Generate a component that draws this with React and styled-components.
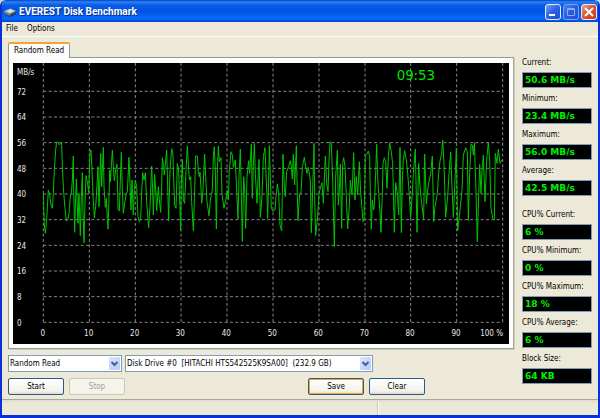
import React from "react";
import styled, { createGlobalStyle, css } from "styled-components";

const GlobalStyle = createGlobalStyle`
  * { box-sizing: border-box; }
  body {
    margin: 0;
    background: #c9dcc0;
    font-family: "DejaVu Sans Condensed", "DejaVu Sans", sans-serif;
    font-stretch: condensed;
    font-size: 8px;
    line-height: 14px;
    color: #000;
  }
`;

const Window = styled.div`
  display: flex;
  flex-direction: column;
  min-height: 100vh;
  border: 2px solid #0831d9;
  border-top: 0;
  border-bottom-width: 3px;
  border-radius: 6px 6px 0 0;
  background: #ece9d8;
  overflow: hidden;
`;

const TitleBar = styled.header`
  display: flex;
  align-items: center;
  gap: 2px;
  height: 22px;
  padding: 2px 0 0 3px;
  margin: 0 -2px;
  background: linear-gradient(#0842c0 0, #2a83f6 2px, #0a5be8 5px, #0053e1 11px, #0566fc 17px, #0566fc 19px, #0046cc 22px);
`;

const Title = styled.h1`
  flex: 1;
  margin: 0;
  color: #fff;
  font-family: Roboto, sans-serif;
  font-stretch: normal;
  font-size: 10px;
  font-weight: 700;
  text-shadow: 1px 1px #0a2f8c;
`;

const Caption = styled.div`
  display: flex;
  gap: 2px;
  padding-right: 3px;
`;

const captionTones = {
  blue: "linear-gradient(135deg, #7ba2f4, #2f63e3 45%, #1c4fd0)",
  faded: "linear-gradient(135deg, #4f80ed, #2860e3 45%, #1d52d2)",
  red: "linear-gradient(135deg, #f0a088, #e35430 45%, #c93b14)",
};

const CaptionButton = styled.button`
  display: flex;
  width: 16px;
  height: 16px;
  padding: 0;
  border: 1px solid ${(p) => (p.$tone === "faded" ? "#7f9fed" : "#e4ecfb")};
  border-radius: 3px;
  background: ${(p) => captionTones[p.$tone]};
`;

const MenuBar = styled.nav`
  display: flex;
  gap: 9px;
  height: 15px;
  padding-left: 4px;
  border-bottom: 1px solid #fff;
`;

const MenuItem = styled.button`
  padding: 0;
  border: 0;
  background: none;
  font: inherit;
`;

const Body = styled.main`
  flex: 1;
  display: flex;
  gap: 8px;
  padding: 5px 4px 4px 6px;
`;

const Work = styled.section`
  flex: 1;
  min-width: 0;
`;

const Tab = styled.button`
  display: block;
  position: relative;
  height: 16px;
  padding: 0 5px;
  margin-bottom: -1px;
  border: 1px solid #919b9c;
  border-top: 2px solid #f3a52f;
  border-bottom: 0;
  border-radius: 2px 2px 0 0;
  background: #fcfcfe;
  font: inherit;
`;

const Panel = styled.div`
  padding: 5px 4px 4px;
  border: 1px solid #919b9c;
  border-right-color: #aca899;
  background: #fcfcfa;
  box-shadow: 1px 1px #d0cebf;
`;

const Plot = styled.svg`
  display: block;
  width: 100%;
  background: #000;
  font-size: 24px;
  fill: #e8e8e8;
`;

const Controls = styled.form`
  display: grid;
  gap: 6px;
  padding-top: 6px;
`;

const Row = styled.div`
  display: flex;
  gap: ${(p) => p.$gap}px;
`;

const Combo = styled.div`
  position: relative;
  width: ${(p) => p.$width}px;
  height: 17px;
  border: 1px solid #7f9db9;
  background: #fff;
`;

const Select = styled.select`
  display: block;
  width: 100%;
  height: 15px;
  padding: 0 14px 0 1px;
  border: 0;
  appearance: none;
  background: #fff;
  color: #000;
  font: inherit;
`;

const DropMark = styled.span`
  position: absolute;
  top: 1px;
  right: 1px;
  display: flex;
  width: 11px;
  height: 13px;
  border-radius: 1px;
  background: linear-gradient(135deg, #dbe5fe, #b4c9f8);
  pointer-events: none;
`;

const Button = styled.button`
  width: 56px;
  height: 17px;
  padding: 0;
  border: 1px solid #2c5b86;
  border-radius: 2px;
  background: linear-gradient(#fff, #f3f2ec 80%, #dcd8ca);
  color: #000;
  font: inherit;

  &:disabled {
    border-color: #c9c7ba;
    background: #f5f4ea;
    color: #a1a192;
  }

  ${(p) =>
    p.$focused &&
    css`
      box-shadow: inset 0 0 0 1px #f0a52c;
    `}
`;

const Spacer = styled.div`
  flex: 1;
  max-width: 173px;
`;

const Readings = styled.aside`
  width: 72px;
  padding-top: 14px;
`;

const Group = styled.div`
  display: grid;
  gap: 4px;

  & + & {
    margin-top: 12px;
  }
`;

const Reading = styled.div`
  display: grid;
  gap: 2px;
  white-space: nowrap;
`;

const Value = styled.output`
  width: 70px;
  height: 16px;
  padding-left: 2px;
  border: 1px solid #7f9db9;
  background: #000;
  color: #00f000;
  font-family: "DejaVu Sans", sans-serif;
  font-stretch: normal;
  font-size: 9px;
  font-weight: 700;
`;

const StatusBar = styled.footer`
  display: flex;
  height: 16px;
  border-top: 1px solid #aca899;
  background: linear-gradient(#dedbcb, #ece9d8 3px);
`;

const StatusCell = styled.div`
  flex: ${(p) => p.$grow};
  margin-top: 2px;
  border-right: ${(p) => (p.$divided ? "1px solid #c8c5b4" : "0")};
  box-shadow: ${(p) => (p.$divided ? "1px 0 #fff" : "none")};
`;

/* Plot units are thirds of a pixel at the default window size. */
const sections = [
  [108, "22,190 25,285 28,310 32,270 37,180 41,195 45,225 49,235 52,190 55,120 59,60 62,36 66,36 70,45 74,38 77,42 79,110 82,170 86,225 91,273 95,270 99,250 103,200 106,190 109,150 112,78 113,180 116,307 119,200 121,147 124,230 126,280 129,190 133,317 136,200 139,128 141,250 144,338 147,220 150,137 154,155 158,187 161,90 163,60 165,60 168,120 171,195 175,264 179,230 183,165 186,110 189,230 192,140 194,70 197,170 202,52 204,170 208,232 211,205 214,265 216,298 219,200 221,120 223,155 229,60 232,110 235,152 239,120 243,103 246,238 250,243 253,150 256,67 259,180 262,250 266,220 270,195 274,185 279,82 282,160 285,240 288,150 292,255 295,180 298,150 302,170 306,260 310,275 314,265 317,190 320,128 324,150 328,128 332,215 338,293 342,230"],
  [450, "5,108 8,180 10,255 14,133 17,180 20,242 25,170 28,210 32,247 35,170 37,83 41,110 43,135 50,60 53,170 56,272 60,120 65,56 69,72 71,150 74,225 78,235 82,100 86,120 89,210 92,302 94,160 97,88 100,210 104,220 108,120 112,48 115,100 118,150 122,140 125,215 130,302 134,180 137,78 142,78 145,125 148,140 150,127 153,175 155,220 159,180 164,72 167,140 171,215 177,257 181,210 187,180 190,80 193,50 196,120 199,297 202,130 205,48 208,95 213,83 216,190 222,235 228,205 232,180 235,210 238,120 243,65 247,75 250,112 256,90 260,180 264,267 267,140 271,57 274,190 277,335 281,140 284,180 287,295 291,140 296,92 299,130 304,42 307,205 310,110 313,40 316,130 321,220 325,130 327,88 331,262 336,200 340,80"],
  [795, "0,53 3,130 6,200 8,265 11,150 13,47 16,140 19,235 24,245 30,240 33,200 37,162 41,190 45,285 50,303 52,190 54,73 58,170 61,200 65,125 71,110 76,92 79,110 82,147 85,73 89,165 94,47 96,150 99,272 104,190 108,190 112,110 118,82 122,110 126,130 130,112 136,150 139,308 143,180 147,40 149,200 152,317 157,270 162,190 167,170 171,158 175,220 178,150 181,78 185,160 189,185 192,90 195,35 199,42 203,150 208,350 212,140 217,60 220,225 224,160 226,102 230,295 233,100 236,83 240,110 244,200 248,297 253,230 256,150 261,195 266,68 270,210 274,140 278,195 283,95 287,190 291,235 294,275 297,270 301,75 306,72 310,63 314,80 316,190 319,298 322,210 326,240 329,210 332,130 335,43 338,140 341,190"],
  [1140, "0,245 3,307 7,190 9,100 13,83 17,95 21,175 25,80 29,38 33,60 38,100 41,220 43,307 47,158 52,190 56,255 60,52 64,308 67,150 70,90 74,62 79,90 83,130 87,180 92,262 97,190 100,130 106,57 111,307 116,100 120,170 125,220 131,267 134,72 139,222 145,165 152,130 157,78 161,275 165,230 172,190 176,130 180,93 185,70 188,30 192,100 197,262 203,200 207,130 212,66 216,170 220,262 225,150 229,55 233,302 240,240 246,180 250,75 257,53 262,65 265,272 269,130 273,42 277,45 280,75 283,38 287,150 292,335 296,200 299,103 303,190 306,120 310,75 315,215 320,90 325,38 329,90 333,235 339,268 343,270 346,70 351,100 355,58 360,100 365,90"],
];

const trace = sections
  .flatMap(([left, points]) =>
    points.split(" ").map((point) => {
      const [x, y] = point.split(",").map(Number);
      return `${x + left},${y + 390}`;
    })
  )
  .join(" ");

const steps = [0, 1, 2, 3, 4, 5, 6, 7, 8, 9, 10];
const columnX = (i) => 130 + Math.round(i * 137.8);
const rowY = (i) => 967 - i * 77;

function Chart() {
  return (
    <Plot viewBox="39 189 1488 843" role="img" aria-label="Random read speed, MB/s">
      <g stroke="#858585" strokeWidth="3" strokeDasharray="9 7">
        {steps.map((i) => (
          <line key={i} x1={columnX(i)} x2={columnX(i)} y1="189" y2="967" />
        ))}
        {steps.slice(0, 10).map((i) => (
          <line key={i} x1="130" x2="1508" y1={rowY(i)} y2={rowY(i)} />
        ))}
      </g>
      <polyline points={trace} fill="none" stroke="#00c400" strokeWidth="3" />
      <text x="51" y="226">MB/s</text>
      {steps.slice(0, 10).map((i) => (
        <text key={i} x="51" y={rowY(i) + 10}>{i * 8}</text>
      ))}
      {steps.slice(0, 10).map((i) => (
        <text key={i} x={columnX(i) - 2} y="1009" textAnchor="middle">{i * 10}</text>
      ))}
      <text x="1509" y="1009" textAnchor="end">100 %</text>
      <text x="1190" y="241" fontSize="40" fontFamily="DejaVu Sans" fontStretch="normal" fill="#00e800">09:53</text>
    </Plot>
  );
}

function Dropdown({ label, value, width }) {
  return (
    <Combo $width={width}>
      <Select aria-label={label} defaultValue={value}>
        <option>{value}</option>
      </Select>
      <DropMark>
        <svg width="11" height="13" viewBox="0 0 11 13" fill="none" stroke="#44618f" strokeWidth="2">
          <path d="M2.5 5 5.5 8 8.5 5" />
        </svg>
      </DropMark>
    </Combo>
  );
}

const groups = [
  [["Current:", "50.6 MB/s"], ["Minimum:", "23.4 MB/s"], ["Maximum:", "56.0 MB/s"], ["Average:", "42.5 MB/s"]],
  [["CPU% Current:", "6 %"], ["CPU% Minimum:", "0 %"], ["CPU% Maximum:", "18 %"], ["CPU% Average:", "6 %"], ["Block Size:", "64 KB"]],
];

export default function App() {
  return (
    <>
      <GlobalStyle />
      <Window>
        <TitleBar>
          <svg width="14" height="12" viewBox="0 0 14 12" aria-hidden="true">
            <path d="M1 6 7 9.5 13 6.5V8L7 11 1 7.5Z" fill="#183a70" />
            <path d="M1 5 7 8V10L1 7Z" fill="#777e80" />
            <path d="M7 8 13 5V7L7 10Z" fill="#3f484c" />
            <path d="M1 5 7.5 2.5 13 5 7 8Z" fill="#b9bdb9" />
            <path d="M4.5 5 7.5 3.5 10 5 7 6.5Z" fill="#e6e8e1" />
          </svg>
          <Title>EVEREST Disk Benchmark</Title>
          <Caption>
            <CaptionButton $tone="blue" aria-label="Minimize">
              <svg width="14" height="14"><path d="M3 9H9V11H3Z" fill="#fff" /></svg>
            </CaptionButton>
            <CaptionButton $tone="faded" aria-label="Maximize">
              <svg width="14" height="14"><path d="M3.5 3.5H10.5V10.5H3.5ZM3 4.5H11" fill="none" stroke="#8faaf0" /></svg>
            </CaptionButton>
            <CaptionButton $tone="red" aria-label="Close">
              <svg width="14" height="14"><path d="M3 3 11 11M11 3 3 11" stroke="#fff" strokeWidth="2" /></svg>
            </CaptionButton>
          </Caption>
        </TitleBar>
        <MenuBar>
          <MenuItem>File</MenuItem>
          <MenuItem>Options</MenuItem>
        </MenuBar>
        <Body>
          <Work>
            <Tab>Random Read</Tab>
            <Panel><Chart /></Panel>
            <Controls onSubmit={(e) => e.preventDefault()}>
              <Row $gap={3}>
                <Dropdown label="Test" value="Random Read" width={114} />
                <Dropdown label="Drive" value={"Disk Drive #0\u00a0 [HITACHI HTS542525K9SA00]\u00a0 (232.9 GB)"} width={248} />
              </Row>
              <Row $gap={5}>
                <Button type="button">Start</Button>
                <Button type="button" disabled>Stop</Button>
                <Spacer />
                <Button type="button" $focused>Save</Button>
                <Button type="button">Clear</Button>
              </Row>
            </Controls>
          </Work>
          <Readings>
            {groups.map((readings) => (
              <Group key={readings[0][0]}>
                {readings.map(([label, value]) => (
                  <Reading key={label}>
                    <label htmlFor={label.replace(/\W/g, "")}>{label}</label>
                    <Value id={label.replace(/\W/g, "")}>{value}</Value>
                  </Reading>
                ))}
              </Group>
            ))}
          </Readings>
        </Body>
        <StatusBar>
          <StatusCell $grow={376} $divided />
          <StatusCell $grow={220} />
        </StatusBar>
      </Window>
    </>
  );
}
